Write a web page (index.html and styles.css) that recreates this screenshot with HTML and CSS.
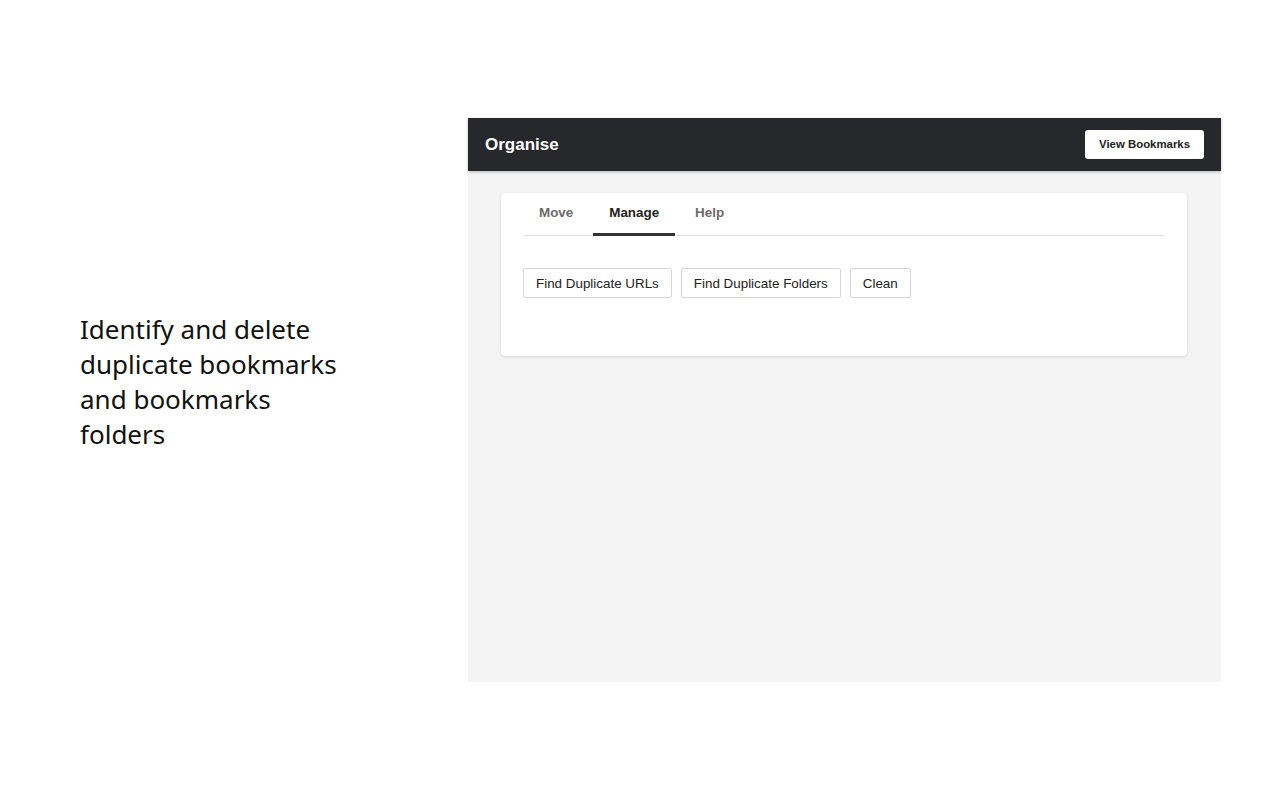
FILE: index.html
```html
<!DOCTYPE html>
<html lang="en">
<head>
<meta charset="utf-8">
<title>Organise</title>
<link rel="stylesheet" href="styles.css">
</head>
<body>
<div class="page">
  <div class="intro">
    <p class="intro-text">Identify and delete duplicate bookmarks and bookmarks folders</p>
  </div>
  <div class="panel">
    <header class="topbar">
      <span class="brand">Organise</span>
      <button class="view-btn">View Bookmarks</button>
    </header>
    <div class="content">
      <div class="card">
        <nav class="tabs">
          <span class="tab">Move</span>
          <span class="tab active">Manage</span>
          <span class="tab">Help</span>
        </nav>
        <div class="actions">
          <button class="btn">Find Duplicate URLs</button>
          <button class="btn">Find Duplicate Folders</button>
          <button class="btn">Clean</button>
        </div>
      </div>
    </div>
  </div>
</div>
</body>
</html>
```

FILE: styles.css
```css
* { box-sizing: border-box; }
html, body { margin: 0; padding: 0; background: #ffffff; }
body { width: 1280px; height: 800px; overflow: hidden; }

.page {
  display: flex;
  padding: 118px 59px 0 80px;
}

.intro {
  flex: 0 0 388px;
  padding-top: 194px;
}
.intro-text {
  margin: 0;
  width: 270px;
  font-family: "Noto Sans", "Open Sans", sans-serif;
  font-size: 26px;
  line-height: 35px;
  color: #111;
}

.panel {
  flex: 0 0 753px;
  height: 564px;
  background: #f4f4f4;
  display: flex;
  flex-direction: column;
  font-family: "Liberation Sans", Arial, sans-serif;
}

.topbar {
  height: 53px;
  background: #27282b;
  display: flex;
  align-items: center;
  justify-content: space-between;
  padding: 0 17px;
  box-shadow: 0 1px 3px rgba(0,0,0,0.25);
  position: relative;
  z-index: 1;
}
.brand {
  color: #fff;
  font-weight: bold;
  font-size: 17px;
}
.view-btn {
  height: 29px;
  margin-top: -1px;
  padding: 0 14px;
  background: #fff;
  border: none;
  border-radius: 3px;
  font-family: "Liberation Sans", Arial, sans-serif;
  font-weight: bold;
  font-size: 11.4px;
  color: #222;
}

.content {
  padding: 22px 34px 0 33px;
}
.card {
  background: #fff;
  border-radius: 4px;
  box-shadow: 0 1px 3px rgba(0,0,0,0.12);
  padding: 0 22px 58px;
}
.tabs {
  display: flex;
  gap: 4px;
  height: 43px;
  border-bottom: 1px solid #e3e3e3;
}
.tab {
  padding: 0 16px 2px;
  display: flex;
  align-items: center;
  font-size: 13.4px;
  font-weight: bold;
  color: #6b6b6b;
  margin-bottom: -1px;
  border-bottom: 3px solid transparent;
}
.tab.active {
  color: #222;
  border-bottom-color: #333;
}
.actions {
  display: flex;
  gap: 9px;
  padding-top: 32px;
}
.btn {
  height: 30px;
  padding: 0 12px;
  background: #fff;
  border: 1px solid #d6d6d6;
  border-radius: 2px;
  font-family: "Liberation Sans", Arial, sans-serif;
  font-size: 13.4px;
  color: #222;
}
```
